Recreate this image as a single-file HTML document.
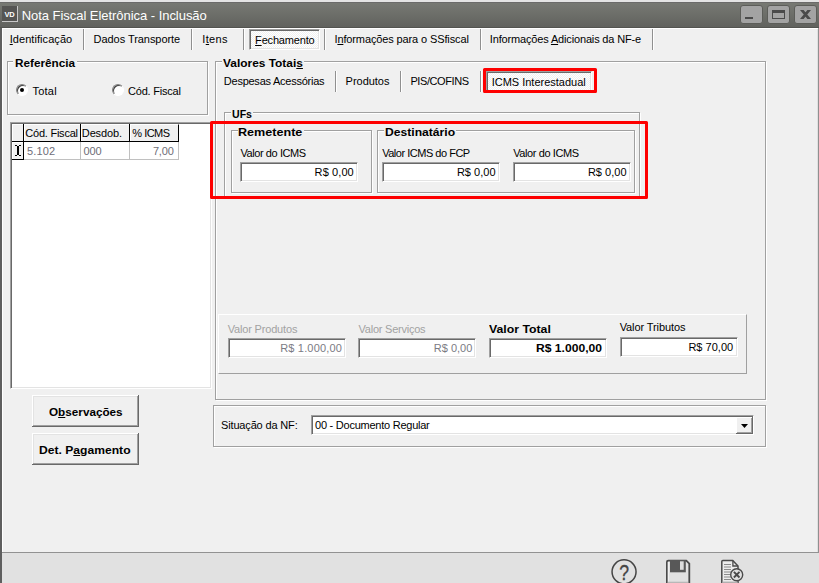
<!DOCTYPE html>
<html><head><meta charset="utf-8">
<style>
*{box-sizing:border-box;margin:0;padding:0}
html,body{width:819px;height:583px;overflow:hidden;background:#f0f0f0}
body{font-family:"Liberation Sans",sans-serif;font-size:11px;color:#000;position:relative}
.abs{position:absolute}
.t{position:absolute;white-space:nowrap;line-height:13px;font-size:11px}
.b{font-weight:bold;transform-origin:0 0}
.sep{position:absolute;width:2px;background:linear-gradient(90deg,#909090 50%,#fff 50%)}
.inp.dith{background:repeating-conic-gradient(#fff 0 25%,#f0f0f0 0 50%) 0 0/2px 2px}
.inp{position:absolute;background:#fff;border:1px solid;border-color:#a0a0a0 #fff #fff #a0a0a0;box-shadow:inset 1px 1px 0 #696969,inset -1px -1px 0 #e3e3e3}
.radio{position:absolute;width:12px;height:12px;border-radius:50%;background:#fff;border:1px solid;border-color:#808080 #fff #fff #808080;box-shadow:inset 1px 1px 0 #404040;transform:rotate(0deg)}
u{text-decoration:underline}
</style></head><body>
<!-- title bar -->
<div class="abs" style="left:0;top:2px;width:819px;height:26px;background:#6b6b6a"></div>
<div class="abs" style="left:0;top:3px;width:819px;height:24px;background:linear-gradient(#777973,#61625e)"></div>
<div class="abs" style="left:0;top:27px;width:819px;height:1px;background:#535450"></div>
<div class="abs" style="left:2px;top:28px;width:816px;height:1px;background:#fff"></div>
<div class="abs" style="left:0;top:0;width:819px;height:2px;background:#e4e4e4"></div>
<div class="abs" style="left:0;top:28px;width:2px;height:555px;background:#5f5f5f"></div>
<div class="abs" style="left:2px;top:28px;width:1px;height:524px;background:#fff"></div>
<div class="abs" style="left:817px;top:29px;width:1px;height:523px;background:#e0e0e0"></div>
<div class="abs" style="left:818px;top:28px;width:1px;height:525px;background:#909090"></div>
<div class="abs" style="left:2px;top:6px;width:16px;height:16px;background:#555553;border-right:1px solid #c8c8c8;border-bottom:1px solid #c8c8c8;color:#fff;font-size:7.500px;font-weight:bold;line-height:17px;text-align:center;letter-spacing:-0.2px">VD</div>
<div class="abs" style="left:740px;top:5px;width:23px;height:19px;background:#a3a3a3;border-radius:3px;border:1px solid #5c5d59"></div>
<div class="abs" style="left:767px;top:5px;width:23px;height:19px;background:#a3a3a3;border-radius:3px;border:1px solid #5c5d59"></div>
<div class="abs" style="left:794px;top:5px;width:23px;height:19px;background:#a3a3a3;border-radius:3px;border:1px solid #5c5d59"></div>
<div class="abs" style="left:745px;top:17px;width:8px;height:2px;background:#4a4a4a"></div>
<div class="abs" style="left:772px;top:10px;width:13px;height:9px;border:1px solid #4a4a4a;border-top:3px solid #4a4a4a"></div>
<svg class="abs" style="left:799px;top:9px" width="13" height="11" viewBox="0 0 13 11"><path d="M1 1h3.600l7.400 9h-3.600zM8.400 1h3.600l-7.400 9h-3.600z" fill="#4a4a4a"/></svg>

<div class="sep" style="left:83px;top:29px;height:21px"></div>
<div class="sep" style="left:191px;top:29px;height:21px"></div>
<div class="sep" style="left:243px;top:29px;height:21px"></div>
<div class="sep" style="left:324px;top:29px;height:21px"></div>
<div class="sep" style="left:480px;top:29px;height:21px"></div>
<div class="sep" style="left:652px;top:29px;height:21px"></div>
<div class="inp dith" style="left:249px;top:29px;width:71px;height:21px"></div>
<div class="abs" style="left:8px;top:62px;width:201px;height:54px;border:1px solid #fff"></div><div class="abs" style="left:7px;top:61px;width:201px;height:54px;border:1px solid #a0a0a0"></div>
<div class="abs" style="left:13px;top:61px;width:64px;height:3px;background:#f0f0f0"></div>
<div class="abs" style="left:216px;top:62px;width:551px;height:339px;border:1px solid #fff"></div><div class="abs" style="left:215px;top:61px;width:551px;height:339px;border:1px solid #a0a0a0"></div>
<div class="abs" style="left:222px;top:61px;width:82px;height:3px;background:#f0f0f0"></div>
<div class="radio" style="left:16px;top:84px"></div><div class="abs" style="left:20px;top:88px;width:4px;height:4px;border-radius:50%;background:#000"></div>
<div class="radio" style="left:112px;top:84px"></div>
<div class="abs" style="left:10px;top:122px;width:202px;height:267px;background:#fff;border:1px solid;border-color:#a0a0a0 #fff #fff #a0a0a0;box-shadow:inset 1px 1px 0 #696969,inset -1px -1px 0 #e3e3e3"></div>
<div class="abs" style="left:12px;top:124px;width:167px;height:18px;background:#f0f0f0;border-bottom:1px solid #000;border-right:1px solid #000;border-top:1px solid #fff"></div>
<div class="abs" style="left:23px;top:124px;width:1px;height:35px;background:#000"></div>
<div class="abs" style="left:80px;top:124px;width:1px;height:18px;background:#000"></div>
<div class="abs" style="left:129px;top:124px;width:1px;height:18px;background:#000"></div>
<div class="abs" style="left:12px;top:142px;width:11px;height:17px;background:#f0f0f0"></div>
<div class="abs" style="left:12px;top:159px;width:12px;height:1px;background:#000"></div>
<div class="abs" style="left:24px;top:159px;width:155px;height:1px;background:#c0c0c0"></div>
<div class="abs" style="left:80px;top:142px;width:1px;height:17px;background:#c0c0c0"></div>
<div class="abs" style="left:129px;top:142px;width:1px;height:17px;background:#c0c0c0"></div>
<div class="abs" style="left:178px;top:142px;width:1px;height:18px;background:#c0c0c0"></div>
<div class="abs" style="left:24px;top:125px;width:1px;height:16px;background:#fff"></div>
<div class="abs" style="left:12px;top:124px;width:1px;height:17px;background:#fff"></div>
<div class="abs" style="left:12px;top:142px;width:1px;height:17px;background:#fff"></div>
<div class="abs" style="left:12px;top:142px;width:11px;height:1px;background:#fff"></div>
<div class="abs" style="left:81px;top:125px;width:1px;height:16px;background:#fff"></div>
<div class="abs" style="left:130px;top:125px;width:1px;height:16px;background:#fff"></div>
<svg class="abs" style="left:15px;top:145px" width="6" height="11" viewBox="0 0 6 11" shape-rendering="crispEdges"><path d="M0 0h2v1h-2zM4 0h2v1h-2zM2 1h2v9h-2zM0 10h2v1h-2zM4 10h2v1h-2z" fill="#000"/></svg>

<div class="abs" style="left:32px;top:395px;width:107px;height:32px;background:#696969"></div><div class="abs" style="left:32px;top:395px;width:106px;height:31px;background:#fff"></div><div class="abs" style="left:33px;top:396px;width:105px;height:30px;background:#a0a0a0"></div><div class="abs" style="left:33px;top:396px;width:104px;height:29px;background:#e3e3e3"></div><div class="abs" style="left:34px;top:397px;width:103px;height:28px;background:#f0f0f0"></div>
<div class="abs" style="left:32px;top:433px;width:107px;height:32px;background:#696969"></div><div class="abs" style="left:32px;top:433px;width:106px;height:31px;background:#fff"></div><div class="abs" style="left:33px;top:434px;width:105px;height:30px;background:#a0a0a0"></div><div class="abs" style="left:33px;top:434px;width:104px;height:29px;background:#e3e3e3"></div><div class="abs" style="left:34px;top:435px;width:103px;height:28px;background:#f0f0f0"></div>
<div class="sep" style="left:335px;top:71px;height:21px"></div>
<div class="sep" style="left:400px;top:71px;height:21px"></div>
<div class="sep" style="left:480px;top:71px;height:21px"></div>
<div class="inp dith" style="left:486px;top:71px;width:106px;height:21px"></div>
<div class="abs" style="left:483px;top:68px;width:114px;height:25px;border:3px solid #fe0000;border-radius:1.500px"></div>
<div class="abs" style="left:225px;top:113px;width:416px;height:86px;border:1px solid #fff"></div><div class="abs" style="left:224px;top:112px;width:416px;height:86px;border:1px solid #a0a0a0"></div>
<div class="abs" style="left:231px;top:112px;width:22px;height:3px;background:#f0f0f0"></div>
<div class="abs" style="left:232px;top:131px;width:141px;height:63px;border:1px solid #fff"></div><div class="abs" style="left:231px;top:130px;width:141px;height:63px;border:1px solid #a0a0a0"></div>
<div class="abs" style="left:238px;top:130px;width:66px;height:3px;background:#f0f0f0"></div>
<div class="abs" style="left:378px;top:131px;width:258px;height:63px;border:1px solid #fff"></div><div class="abs" style="left:377px;top:130px;width:258px;height:63px;border:1px solid #a0a0a0"></div>
<div class="abs" style="left:384px;top:130px;width:72px;height:3px;background:#f0f0f0"></div>
<div class="inp" style="left:240px;top:162px;width:118px;height:20px"></div>
<div class="inp" style="left:382px;top:162px;width:118px;height:20px"></div>
<div class="inp" style="left:513px;top:162px;width:118px;height:20px"></div>
<div class="abs" style="left:210px;top:121px;width:438px;height:78px;border:3px solid #fe0000;border-radius:1.500px"></div>
<div class="abs" style="left:218px;top:314px;width:529px;height:60px;border:1px solid;border-color:#fff #a0a0a0 #a0a0a0 #fff"></div>
<div class="inp" style="left:228px;top:338px;width:118px;height:20px"></div>
<div class="inp" style="left:358px;top:338px;width:118px;height:20px"></div>
<div class="inp" style="left:489px;top:338px;width:118px;height:20px"></div>
<div class="inp" style="left:620px;top:337px;width:118px;height:20px"></div>
<div class="abs" style="left:214px;top:406px;width:553px;height:42px;border:1px solid #fff"></div><div class="abs" style="left:213px;top:405px;width:553px;height:42px;border:1px solid #a0a0a0"></div>
<div class="inp" style="left:311px;top:415px;width:443px;height:20px"></div>
<div class="abs" style="left:736px;top:417px;width:17px;height:17px;background:#696969"></div><div class="abs" style="left:736px;top:417px;width:16px;height:16px;background:#fff"></div><div class="abs" style="left:737px;top:418px;width:15px;height:15px;background:#a0a0a0"></div><div class="abs" style="left:737px;top:418px;width:14px;height:14px;background:#f0f0f0"></div>
<svg class="abs" style="left:741px;top:424px" width="7" height="4" viewBox="0 0 7 4"><path d="M0 0h7L3.500 4z" fill="#000"/></svg>
<div class="abs" style="left:2px;top:552px;width:817px;height:31px;background:#e1e1e1;border-top:1px solid #929292"></div>
<svg class="abs" style="left:600px;top:553px" width="160" height="30" viewBox="600 553 160 30">
<circle cx="624.050" cy="571.850" r="12" fill="none" stroke="#454545" stroke-width="1.500"/>
<text transform="translate(624.200 580.200) scale(0.800 1)" x="0" y="0" font-size="22" text-anchor="middle" fill="#454545" stroke="#454545" stroke-width="0.350" font-family="Liberation Sans, sans-serif">?</text>
<path d="M666.900 584 V562 Q666.900 560.700 668.200 560.700 H686.300 L689.300 563.600 V584" fill="none" stroke="#4a4a4a" stroke-width="1.800"/>
<path d="M668.300 584 V562" stroke="#f4f4f4" stroke-width="1" fill="none"/>
<rect x="670" y="560" width="15.800" height="12.300" fill="#585858"/>
<rect x="680" y="561.300" width="3.700" height="8.500" fill="#dcdcdc"/>
<rect x="668" y="581.700" width="20" height="2" fill="#b8b8b8"/>
<path d="M721.800 584 V561.500 Q721.800 560.500 722.800 560.500 H732.700 L738 566 V584" fill="#ececec" stroke="#4a4a4a" stroke-width="1.500"/>
<rect x="722.500" y="581.600" width="15" height="2" fill="#b0b0b0"/>
<path d="M732.900 560.500 V566 H738" fill="none" stroke="#4a4a4a" stroke-width="1.300"/>
<path d="M724 564.500h7M724 567h7M724 569.500h7M724 572h7M724 574.500h7M724 577h7M724 579.500h7" stroke="#8a8a8a" stroke-width="1.200"/>
<circle cx="736.700" cy="574.700" r="6" fill="#e1e1e1" stroke="#4a4a4a" stroke-width="1.400"/>
<path d="M733.900 571.900l5.600 5.600m0-5.600l-5.600 5.600" stroke="#4a4a4a" stroke-width="1.900"/>
</svg>

<div class="t" style="left:21.70px;top:8px;letter-spacing:-0.042px;font-size:13px;line-height:15px;color:#fff">Nota Fiscal Eletrônica - Inclusão</div>
<div class="t" style="left:9.66px;top:33px;letter-spacing:0.067px"><u>I</u>dentificação</div>
<div class="t" style="left:93.61px;top:33px;letter-spacing:-0.056px">Dados Transporte</div>
<div class="t" style="left:202.34px;top:33px;letter-spacing:0.331px">I<u>t</u>ens</div>
<div class="t" style="left:255.10px;top:34px;letter-spacing:-0.179px"><u>F</u>echamento</div>
<div class="t" style="left:334.44px;top:33px;letter-spacing:-0.120px">I<u>n</u>formações para o SSfiscal</div>
<div class="t" style="left:489.86px;top:33px;letter-spacing:-0.160px">Informações <u>A</u>dicionais da NF-e</div>
<div class="t b" style="left:14.95px;top:57px;transform:scaleX(1.0687)">Referência</div>
<div class="t b" style="left:223.38px;top:57px;transform:scaleX(1.0831)">Valores Totai<u>s</u></div>
<div class="t b" style="left:231.98px;top:108px;transform:scaleX(0.9627)">UFs</div>
<div class="t b" style="left:238.16px;top:126px;transform:scaleX(1.1442)">Remetente</div>
<div class="t b" style="left:384.95px;top:126px;transform:scaleX(1.1027)">Destinatário</div>
<div class="t" style="left:32.53px;top:85px;letter-spacing:0.218px">Total</div>
<div class="t" style="left:128.07px;top:85px;letter-spacing:-0.216px">Cód. Fiscal</div>
<div class="t" style="left:223.82px;top:75px;letter-spacing:-0.247px">Despesas Acessórias</div>
<div class="t" style="left:345.62px;top:75px;letter-spacing:-0.025px">Produtos</div>
<div class="t" style="left:410.40px;top:75px;letter-spacing:-0.405px">PIS/COFINS</div>
<div class="t" style="left:491.66px;top:76px;letter-spacing:-0.005px">ICMS Interestadual</div>
<div class="t" style="left:240.41px;top:147px;letter-spacing:-0.411px">Valor do ICMS</div>
<div class="t" style="left:314.61px;top:166px;letter-spacing:0.099px">R$ 0,00</div>
<div class="t" style="left:382.15px;top:147px;letter-spacing:-0.482px">Valor ICMS do FCP</div>
<div class="t" style="left:456.91px;top:166px;letter-spacing:0.024px">R$ 0,00</div>
<div class="t" style="left:513.15px;top:147px;letter-spacing:-0.390px">Valor do ICMS</div>
<div class="t" style="left:587.91px;top:166px;letter-spacing:0.024px">R$ 0,00</div>
<div class="t" style="left:227.65px;top:323px;letter-spacing:-0.168px;color:#a2a2a2">Valor Produtos</div>
<div class="t" style="left:280.19px;top:342px;letter-spacing:0.176px;color:#7b7b84">R$ 1.000,00</div>
<div class="t" style="left:358.51px;top:323px;letter-spacing:-0.229px;color:#a2a2a2">Valor Serviços</div>
<div class="t" style="left:433.75px;top:342px;letter-spacing:0.014px;color:#7b7b84">R$ 0,00</div>
<div class="t b" style="left:488.55px;top:323px;transform:scaleX(1.1159)">Valor Total</div>
<div class="t b" style="left:536.45px;top:342px;transform:scaleX(1.1006)">R$ 1.000,00</div>
<div class="t" style="left:619.65px;top:321px;letter-spacing:-0.092px">Valor Tributos</div>
<div class="t" style="left:688.40px;top:341px;letter-spacing:0.017px">R$ 70,00</div>
<div class="t" style="left:221.06px;top:419px;letter-spacing:-0.159px">Situação da NF:</div>
<div class="t" style="left:315.04px;top:419px;letter-spacing:-0.244px">00 - Documento Regular</div>
<div class="t" style="left:25.29px;top:127px;letter-spacing:-0.231px">Cód. Fiscal</div>
<div class="t" style="left:81.82px;top:127px;letter-spacing:-0.130px">Desdob.</div>
<div class="t" style="left:132.30px;top:127px;letter-spacing:-0.504px">% ICMS</div>
<div class="t" style="left:26.97px;top:145px;letter-spacing:0.186px;color:#6e6e78">5.102</div>
<div class="t" style="left:83.51px;top:145px;letter-spacing:-0.135px;color:#6e6e78">000</div>
<div class="t" style="left:152.88px;top:145px;letter-spacing:-0.141px;color:#6e6e78">7,00</div>
<div class="t b" style="left:48.82px;top:406px;transform:scaleX(1.0653)">O<u>b</u>servações</div>
<div class="t b" style="left:39.05px;top:444px;transform:scaleX(1.1008)">Det. P<u>a</u>gamento</div>
</body></html>
